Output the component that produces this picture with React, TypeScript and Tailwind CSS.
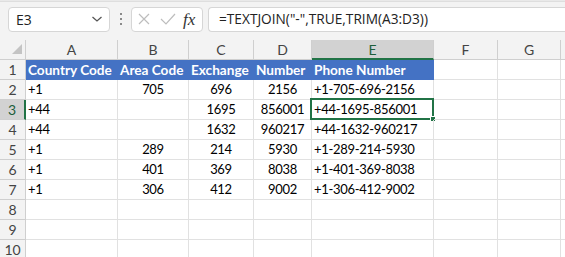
import React from "react";

const cols = [
  { l: "A", w: 92 },
  { l: "B", w: 71 },
  { l: "C", w: 65 },
  { l: "D", w: 58 },
  { l: "E", w: 122 },
  { l: "F", w: 64 },
  { l: "G", w: 63 },
];

const data: string[][] = [
  ["Country Code", "Area Code", "Exchange", "Number", "Phone Number", "", ""],
  ["+1", "705", "696", "2156", "+1-705-696-2156", "", ""],
  ["+44", "", "1695", "856001", "+44-1695-856001", "", ""],
  ["+44", "", "1632", "960217", "+44-1632-960217", "", ""],
  ["+1", "289", "214", "5930", "+1-289-214-5930", "", ""],
  ["+1", "401", "369", "8038", "+1-401-369-8038", "", ""],
  ["+1", "306", "412", "9002", "+1-306-412-9002", "", ""],
  ["", "", "", "", "", "", ""],
  ["", "", "", "", "", "", ""],
  ["", "", "", "", "", "", ""],
];

const gridTemplate = "26px 92px 71px 65px 58px 122px 64px 63px 1fr";

export default function App() {
  return (
    <div
      className="w-[565px] h-[257px] overflow-hidden bg-white text-black"
      style={{ fontFamily: "Lato, 'Liberation Sans', sans-serif" }}
    >
      {/* Toolbar */}
      <div className="h-[40px] bg-[#f3f3f3] flex flex-col">
        <div className="h-[2px] bg-[#e9e9e9] border-b border-[#dedede]" />
        <div className="flex items-center pt-[4px] pl-[8px] h-[30px]">
          <div className="w-[102px] h-[25px] bg-white border border-[#d6d6d6] rounded-[4px] flex items-center justify-between pl-[7px] pr-[6px]">
            <span className="text-[14px] text-[#222]" style={{ fontFamily: "'Open Sans', sans-serif" }}>E3</span>
            <svg width="12" height="8" viewBox="0 0 12 8">
              <path d="M1.5 2 L6 6 L10.5 2" fill="none" stroke="#555" strokeWidth="1.3" />
            </svg>
          </div>
          <div className="w-[21px] flex flex-col items-center gap-[3px]">
            <div className="w-[2px] h-[2px] bg-[#8a8a8a]" />
            <div className="w-[2px] h-[2px] bg-[#8a8a8a]" />
            <div className="w-[2px] h-[2px] bg-[#8a8a8a]" />
          </div>
          <div className="w-[72px] h-[25px] bg-white border border-[#d6d6d6] rounded-[4px] flex items-center pl-[6px]">
            <svg width="12" height="12" viewBox="0 0 12 12">
              <path d="M1 1 L11 11 M11 1 L1 11" stroke="#bdbdbd" strokeWidth="1.2" />
            </svg>
            <svg width="16" height="12" viewBox="0 0 16 12" className="ml-[10px]">
              <path d="M1 6 L6 11 L15 1" fill="none" stroke="#bdbdbd" strokeWidth="1.2" />
            </svg>
            <span
              className="ml-[7px] text-[17px] italic text-[#333] leading-none"
              style={{ fontFamily: "'Liberation Serif', serif" }}
            >
              fx
            </span>
          </div>
          <div className="ml-[5px] flex-1 h-[25px] bg-white border border-[#d6d6d6] border-r-0 rounded-l-[4px] flex items-center pl-[10px]">
            <span className="text-[13.7px] text-[#222]" style={{ fontFamily: "'Open Sans', sans-serif" }}>
              =TEXTJOIN("-",TRUE,TRIM(A3:D3))
            </span>
          </div>
        </div>
      </div>

      {/* Grid */}
      <div className="grid" style={{ gridTemplateColumns: gridTemplate }}>
        <div className="h-[20px] bg-[#f3f3f3] border-r border-b border-[#cfcfcf] relative">
          <svg width="26" height="20" viewBox="0 0 26 20" className="absolute left-0 top-0">
            <path d="M22 4 L22 14 L12 14 Z" fill="#c4c4c4" />
          </svg>
        </div>
        {cols.map((c) =>
          c.l === "E" ? (
            <div
              key={c.l}
              className="h-[20px] bg-[#d2d2d2] border-r border-[#cfcfcf] border-b-2 border-b-[#217346] flex items-center justify-center text-[14px] text-[#1d5e3a]"
            >
              {c.l}
            </div>
          ) : (
            <div
              key={c.l}
              className="h-[20px] bg-[#f3f3f3] border-r border-b border-[#cfcfcf] flex items-center justify-center text-[14px] text-[#444]"
            >
              {c.l}
            </div>
          )
        )}
        <div className="h-[20px] bg-[#f3f3f3] border-b border-[#cfcfcf]" />

        {data.map((row, ri) => {
          const rn = ri + 1;
          const sel = rn === 3;
          return (
            <React.Fragment key={rn}>
              <div
                className={
                  sel
                    ? "h-[20px] bg-[#d2d2d2] border-r-2 border-r-[#217346] border-b border-[#cfcfcf] flex items-center justify-center text-[14px] text-[#1d5e3a]"
                    : "h-[20px] bg-[#f3f3f3] border-r border-b border-[#cfcfcf] flex items-center justify-center text-[14px] text-[#444]"
                }
              >
                {rn}
              </div>
              {row.map((v, ci) => {
                const isHeader = rn === 1 && ci < 5;
                const isNum = ci >= 1 && ci <= 3 && rn > 1;
                const isSel = sel && ci === 4;
                let cls =
                  "h-[20px] border-r border-b whitespace-nowrap overflow-visible flex items-center relative pt-[1px] ";
                if (isHeader) {
                  cls += "bg-[#4472c4] border-[#4472c4] text-white font-bold pl-[2px] text-[13.6px] ";
                } else {
                  cls += "border-[#e1e1e1] text-[13px] tracking-[-0.3px] ";
                  cls += isNum ? "justify-center " : "pl-[2px] ";
                }
                return (
                  <div key={ci} className={cls}>
                    {v}
                    {isSel && (
                      <div className="absolute left-[-2px] top-[-2px] right-[-1px] bottom-[-1px] border-2 border-[#217346]">
                        <div className="absolute right-[-4px] bottom-[-4px] w-[6px] h-[6px] bg-[#217346] border border-white" />
                      </div>
                    )}
                  </div>
                );
              })}
              <div className="h-[20px] border-b border-[#e1e1e1]" />
            </React.Fragment>
          );
        })}
      </div>
    </div>
  );
}
